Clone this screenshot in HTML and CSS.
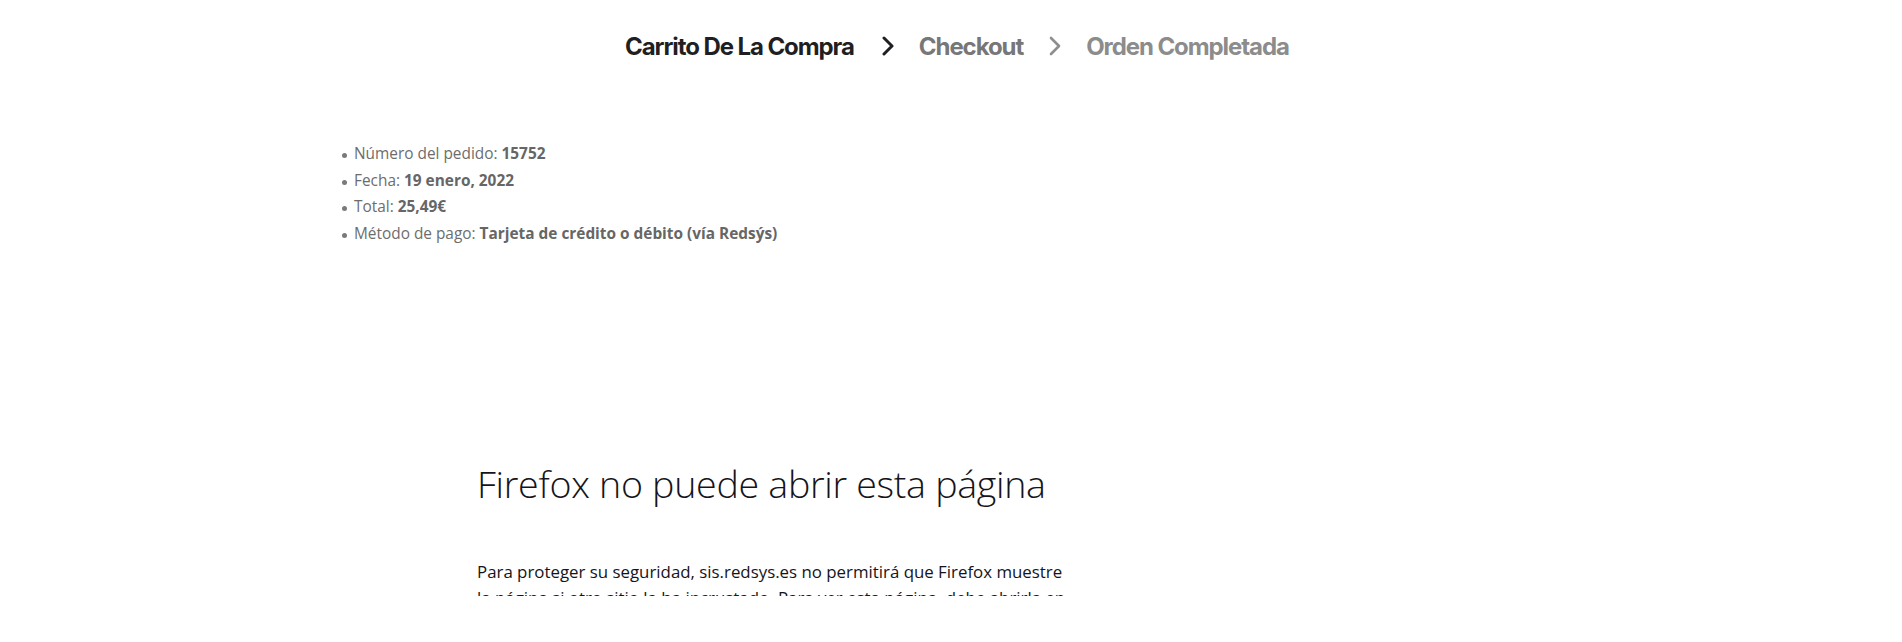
FILE: index.html
```html
<!DOCTYPE html>
<html lang="es">
<head>
<meta charset="utf-8">
<title>Orden Completada</title>
<link rel="stylesheet" href="styles.css">
</head>
<body>
<nav class="steps">
  <span class="step step-active">Carrito De La Compra</span>
  <svg class="chev chev-dark" width="12" height="20" viewBox="0 0 12 20"><path d="M2 2 L10 10 L2 18" fill="none" stroke="currentColor" stroke-width="3" stroke-linecap="round" stroke-linejoin="round"/></svg>
  <span class="step step-mid">Checkout</span>
  <svg class="chev chev-light" width="12" height="20" viewBox="0 0 12 20"><path d="M2 2 L10 10 L2 18" fill="none" stroke="currentColor" stroke-width="2.6" stroke-linecap="round" stroke-linejoin="round"/></svg>
  <span class="step step-light">Orden Completada</span>
</nav>

<ul class="order">
  <li>Número del pedido: <strong>15752</strong></li>
  <li>Fecha: <strong>19 enero, 2022</strong></li>
  <li>Total: <strong>25,49€</strong></li>
  <li>Método de pago: <strong>Tarjeta de crédito o débito (vía Redsýs)</strong></li>
</ul>

<div class="frame">
  <h1 class="frame-title">Firefox no puede abrir esta página</h1>
  <p class="frame-text">Para proteger su seguridad, sis.redsys.es no permitirá que Firefox muestre la página si otro sitio la ha incrustado. Para ver esta página, debe abrirla en una nueva ventana.</p>
</div>
</body>
</html>
```
FILE: styles.css
```css
html, body {
  margin: 0;
  padding: 0;
  background: #ffffff;
}

body {
  width: 1902px;
  height: 642px;
  overflow: hidden;
}

.steps {
  display: flex;
  align-items: center;
  padding: 30px 0 0 625px;
  height: 32px;
  font-family: "Inter", "Liberation Sans", sans-serif;
  font-weight: 700;
  font-size: 24px;
  letter-spacing: -0.045em;
}

.step-active { color: #1f1f23; }
.step-mid { color: #777777; }
.step-light { color: #8c8c8c; }

.chev { display: block; }
.chev-dark { color: #1f1f23; margin: 0 25px 0 28px; }
.chev-light { color: #8e8e8e; margin: 0 25px 0 26px; }

.order {
  margin: 79px 0 0 0;
  padding: 0 0 0 354px;
  font-family: "Open Sans", "Liberation Sans", sans-serif;
  font-size: 15.4px;
  line-height: 26.7px;
  color: #6d6d6d;
  list-style: none;
}

.order li {
  position: relative;
}

.order li::before {
  content: "";
  position: absolute;
  left: -12px;
  top: 12px;
  width: 5px;
  height: 5px;
  border-radius: 50%;
  background: #7a7a7a;
}

.order strong {
  font-weight: 700;
  color: #666666;
}

.frame {
  margin: 210px 0 0 477px;
  width: 660px;
  height: 138px;
  overflow: hidden;
  color: #15141a;
  font-family: "Open Sans", "Liberation Sans", sans-serif;
}

.frame-title {
  margin: 0;
  font-weight: 300;
  font-size: 37.6px;
  line-height: 52px;
  letter-spacing: -0.3px;
}

.frame-text {
  margin: 49px 0 0 0;
  font-size: 16.85px;
  line-height: 26px;
  width: 596px;
}
```
